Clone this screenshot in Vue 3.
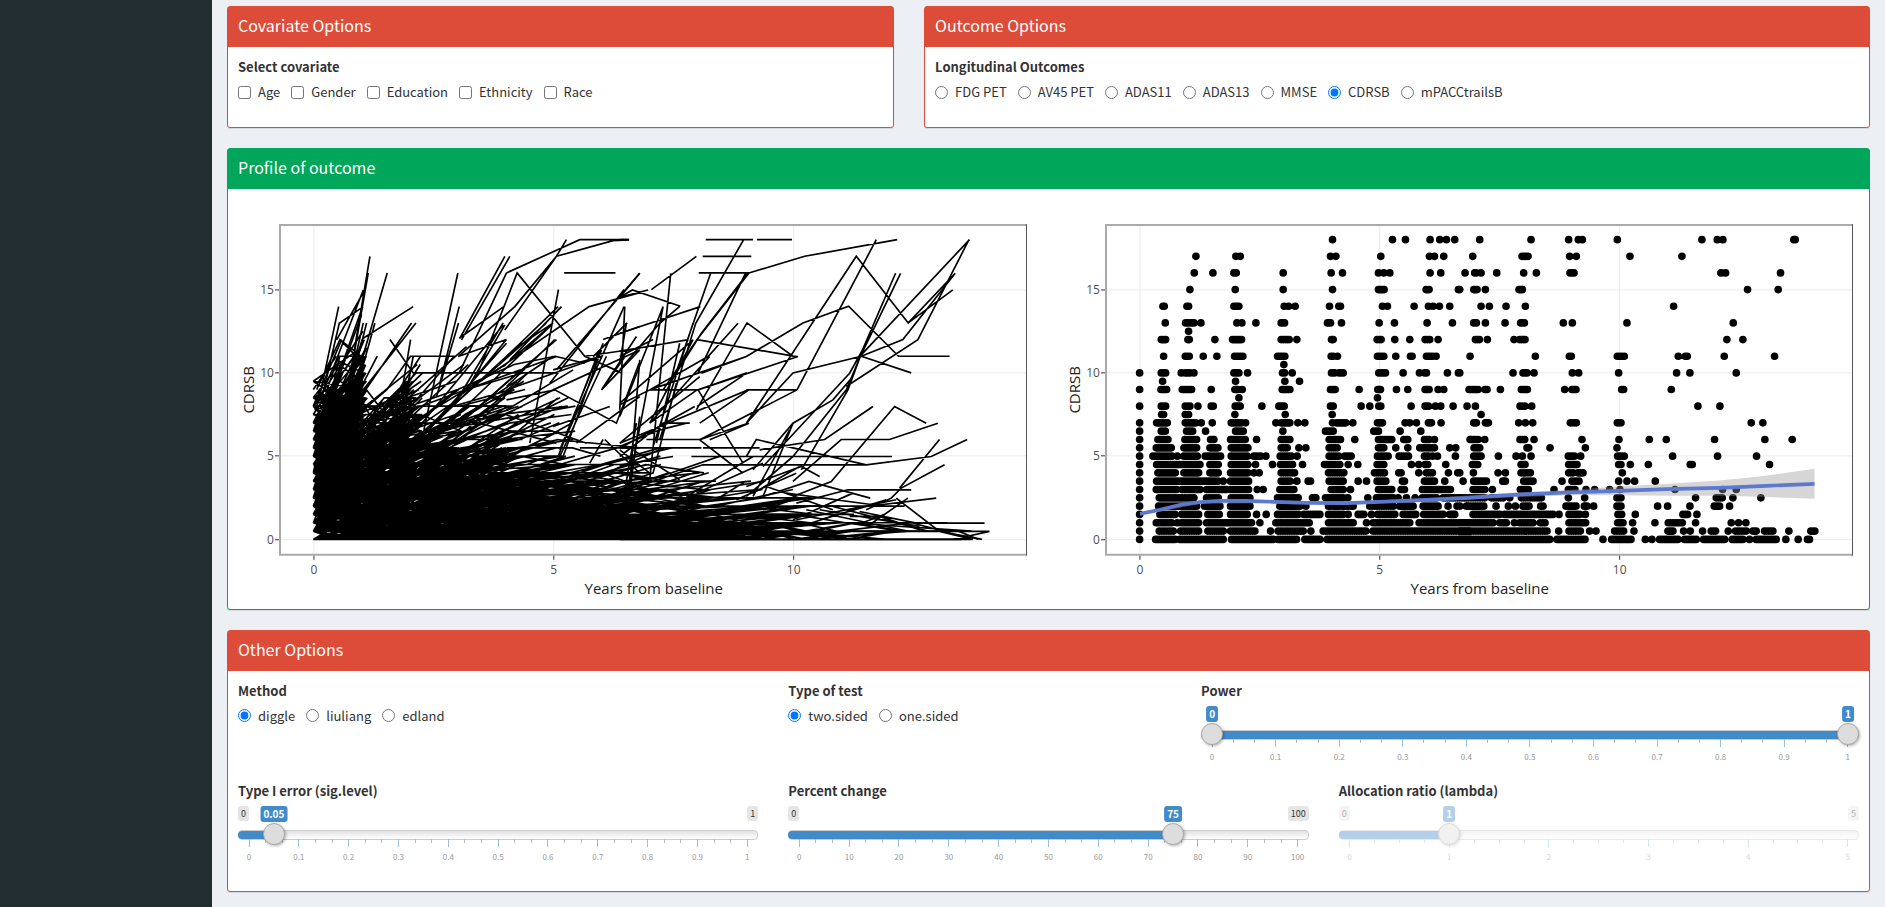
<script setup>
import { reactive } from 'vue'

const covariates = ['Age', 'Gender', 'Education', 'Ethnicity', 'Race']
const outcomes = ['FDG PET', 'AV45 PET', 'ADAS11', 'ADAS13', 'MMSE', 'CDRSB', 'mPACCtrailsB']
const methods = ['diggle', 'liuliang', 'edland']
const tests = ['two.sided', 'one.sided']

const form = reactive({
  covariates: [],
  outcome: 'CDRSB',
  method: 'diggle',
  test: 'two.sided',
})

const tenths = ['0', '0.1', '0.2', '0.3', '0.4', '0.5', '0.6', '0.7', '0.8', '0.9', '1']
const tens = ['0', '10', '20', '30', '40', '50', '60', '70', '80', '90', '100']

const sliders = reactive([
  { id: 'power', label: 'Power', min: 0, max: 1, step: 0.01, values: [0, 1], labels: tenths, parts: 3 },
  { id: 'alpha', label: 'Type I error (sig.level)', min: 0, max: 1, step: 0.01, values: [0.05], labels: tenths, parts: 3 },
  { id: 'change', label: 'Percent change', min: 0, max: 100, step: 1, values: [75], labels: tens, parts: 3 },
  { id: 'lambda', label: 'Allocation ratio (lambda)', min: 0, max: 5, step: 1, values: [1], labels: ['0', '1', '2', '3', '4', '5'], parts: 4, disabled: true },
])

function ticks(s) {
  const out = []
  s.labels.forEach((text, i) => {
    out.push({ text })
    if (i < s.labels.length - 1) for (let k = 1; k < s.parts; k++) out.push({ text: '' })
  })
  return out
}

// The handle is 22px wide, so its centre travels between 11px and 100% - 11px.
function place(s, v) {
  const p = (v - s.min) / (s.max - s.min)
  return `calc(11px + (100% - 22px) * ${p})`
}

function fill(s) {
  if (s.values.length === 2) return { '--from': place(s, s.values[0]), '--to': place(s, s.values[1]) }
  return { '--from': '0px', '--to': place(s, s.values[0]) }
}

// Drawing units of both panels: 144 per year, 50 per CDRSB point, zero at y = 989.
const yOf = (v) => 989 - 50 * v

// Scatter rows: [score, first six and a half years, later years]; "a-b" is a run of dots.
const rows = [
  [18, '818 998 1037 1111 1140 1160 1185', '60 214 327 356 368 473 727 773 790 1003 1007'],
  [17, '408 528 541 812 828 963 1109 1124 1152', '39 187-205 330 350 511 667'],
  [16, '403 459 522 529 670 814 848 956 972 990 1111 1143 1216', '16 45 49 64 111 192 230 331-343 784 798 963'],
  [15, '390 526 670 818 956-973 1099 1108 1196', '0 42-52 77 178-188 864 956'],
  [14, '309 313 381 386 522-537 673 686 706 809 837 842 968 983 1063 1106 1120 1139 1170', '64 89 139 197 642'],
  [13, '316 377-402 423 531 546 588 664-674 803-812 845 958 1004 1102 1178', '42-50 77 136 183-194 311 338 502 821'],
  [12.5, '386', ''],
  [12, '304-317 384 388 465 518-545 664-688 711 815-820 952-964 1005 1050 1096-1110 1135', '47-59 83 163 180-196 802 850'],
  [11, '311 376-388 430 471 524-549 653-675 814-820 833 953-972 1008 1052 1057 1100-1118 1129', '31 227 329-335 473-494 656 677-683 794 945'],
  [10.5, '672', ''],
  [10, '239 304-317 364 376-390 402 522-537 563 668-674 697 815-824 838-850 957-977 1030 1079 1095 1100 1163 1196', '0 160 190-202 223 338 357 477 651 691 830'],
  [9.5, '308 527 675 719', ''],
  [9, '239 303-320 367-395 454 525-533 547 667-690 812-826 898 954-962 1010 1044 1096-1108 1135 1152 1228', '28-55 76-82 122 185-203 315 337-349 486-492 635'],
  [8.5, '537 953', ''],
  [8, '239 304-317 376-390 414 454-460 526-541 606 657-673 812-820 904 930 957-963 1054 1096-1106 1127 1143 1180 1222', '22 47 181-195 216 715 781'],
  [7.5, '305 311 376 386 525 676 817', '64'],
  [7, '239 290-322 376-408 424 457 514-545 557 648 664-690 714 735 818 830-858 879 953-968 1036 1050 1070 1106-1115 1144', '42-50 77-86 177 197 219 332-350 473-484 875 910'],
  [6.5, '239 304-316 380-398 437 527-550 669 797-820 942-956 1021 1083', ''],
  [6, '239 294-324 375-410 452-462 512-556 590 664-690 808-842 885 956-996 1032-1044 1094-1108 1124 1231', '35-55 75 181-195 223 367 478 569 620 765 916 998'],
  [5.5, '239 289-334 372-410 450-474 514-564 664-682 717 738 808-832 956-972 1008 1044 1080-1124 1170 1188', '43-60 202-207 271 377 472'],
  [5, '239 279-336 352 372-412 436-482 514-562 582-602 618 661-694 712 808-836 855-874 953-985 1018-1046 1094-1106 1118 1133 1187', '42-64 116 169 188 214 326-344 363 474-494 639 774 891'],
  [4.5, '239 290-420 450-475 514-564 587 638 662-698 728 794-840 865 894 952-972 1055 1077 1096-1104 1158', '38-54 184-196 327-352 477-484 512 566 692-698 930'],
  [4, '239 294-346 372-416 450-475 512-564 582 598 664-704 806-852 944-974 1017-1024 1077 1100-1118 1166 1194', '0 41 115 137 184-212 327-340 355-370 488'],
  [3.5, '239 290-474 490 512-566 664-690 711 745-752 808-850 895 920 952-978 1028-1034 1094-1124 1155 1210', '10 42-80 129-137 192-220 307 337-358 477 502 525 587'],
  [3, '239 289-350 366-420 440-500 512-566 592 610 660-702 814-850 872 956-996 1024-1034 1088-1172', '40-75 98 182-206 283 326-346 379 405 450 481 646 789 830'],
  [2.5, '239 298-402 440-475 514-570 653-715 758-768 797-850 864 924 950-1000 1015 1040 1066 1088-1130 1150-1200', '0-75 95-130 150 185-245 326 375 472-484 708 770-788 820 904'],
  [2, '239 296-410 434-480 512-570 660-720 738 806-880 930-1000 1020-1060 1090-1135 1165 1192 1222', '0 20-72 109 146 167 190-208 243-250 319-349 374-382 402 472-484 594 624 691 764-780 810'],
  [1.5, '239 300-345 366-416 444-478 512-562 590 619 653-715 732-780 806-850 865 895-912 935 954-1005 1030-1068 1092-1150 1170-1185', '40-120 135-280 298 328-360 377 475-486 527 670-684 712'],
  [1, '239 289-335 352 364-416 440-575 600 648-748 806-880 920 940-1050 1078-1230', '0-100 120-140 164 180-220 242-256 328-378 474-490 519 586 626-668 708 815 837 859'],
  [0.5, '239 298-340 362-416 444-490 512-585 632 655-730 753 790-918 940-1230', '0-262 297 328-362 390 409 465-492 523 625-640 672 692 729 755-768 806 828-860 880-890 915-940 988 1054-1066'],
  [0, '239 287-345 360-490 515-640 655-710 735-780 802-1232', '0-270 292-376 430 456-514 557 577 600-655 675-710 732-795 818-850 870 890-950 979 1016 1044-1050'],
]

function expand(list, shift) {
  return list.split(' ').filter(Boolean).flatMap((t) => {
    const [a, b] = t.split('-').map(Number)
    if (b === undefined) return [a + shift]
    const n = Math.max(1, Math.ceil((b - a) / 7))
    return Array.from({ length: n + 1 }, (_, i) => a + shift + ((b - a) * i) / n)
  })
}

const dots = rows
  .flatMap(([v, early, late]) => [...expand(early, 0), ...expand(late, 1200)].map((x) => `M${x.toFixed(1)},${yOf(v)}h0`))
  .join('')

const fitLine =
  'M240,912L300,900L365,884L420,877L480,873L560,873L640,876L740,879L860,880L960,876L1100,870L1230,864L1300,859L1400,853L1530,848L1678,843L1820,838L1980,834L2120,828L2265,822'
const ribbon =
  'M240,908L420,872L640,872L860,876L1100,865L1300,852L1530,840L1678,830L1840,821L1980,812L2100,800L2265,777V867L2100,861L1980,858L1840,858L1678,856L1530,856L1300,865L1100,874L860,884L640,880L420,882L240,918Z'

// Individual trajectories that stand clear of the dense mass.
const early =
  'M860,189L1080,89H1228M1010,139L1180,92L1228,90M1033,189H1187M380,560L450,139M370,620L445,189M420,470L502,189' +
  'M612,660L714,189M720,385L855,139M725,390L870,139M350,390L435,239M295,580L356,290M300,590L358,340L430,290M430,385L580,290' +
  'M430,540L588,339M430,550L575,339M510,389L580,489H1010M570,439H705M660,520L718,290M650,560L716,339M718,385L852,290' +
  'M715,440L885,290L1010,139L1040,89M770,500L892,189L1095,439L1206,489M718,489L860,189M855,360L1010,139M930,700L1016,239' +
  'M715,560L1108,290L1260,248M870,450L1025,290M860,440L1015,290M880,420L1000,339M850,470L995,345M1010,480L1260,190M990,520L1213,239' +
  'M1030,700L1213,290M1150,389L1260,350M1120,440L1222,339M1005,439L1095,460M1095,439L1260,415M1145,540L1260,420M1000,480L1140,440' +
  'M860,570L1005,540L1190,640L1258,460M1020,740L1160,439M1030,740L1145,420M1015,740L1135,430M1020,720L1150,400M430,439L355,439M360,389L425,440' +
  'M430,590H495L440,690M430,580L490,690M715,440L860,389M570,560L740,410M700,590L850,339M740,540L855,345M720,560L860,389M860,530L1005,389' +
  'M430,600L500,540L572,439M520,700L572,389M530,700L580,439M540,700L572,480M420,500L465,339M430,520L472,439M380,560L430,339M390,540L440,339' +
  'M330,500L430,240M340,540L428,290M290,539L360,389L410,440M285,600L350,450L430,489M600,590L1010,440M570,640H740M700,589L870,540M720,589H860' +
  'M860,540L1145,440M860,600L1060,480M1000,540L1260,420M1145,540L1216,440M1070,700L1260,560M1000,650L1170,590M1080,714H1260M1010,689L1260,714' +
  'M860,615L1100,700M740,630L1010,700M1150,689L1110,760M1155,689L1260,790M1200,765H1260M1215,960L1260,620M1205,900L1250,640M1230,820L1260,450' +
  'M1145,540L1250,380M570,700L980,339M580,740L990,350M720,640L1010,389M700,640L1000,439M590,660L850,345M600,690L860,400'
const late =
  'M0,89H28M258,89H400M412,89H517M249,139H395M237,189H388L555,139L833,89M95,239L230,139M0,262L60,190M0,262L38,240L182,289M0,262L85,240' +
  'M20,860L130,290M90,810L153,190M165,500L273,189M120,690L228,340L372,89M150,520L245,370L385,189M235,490L378,189M130,540L232,389L388,189' +
  'M0,370L242,290M0,424L207,389M232,389L535,441M0,440L100,389M90,540L265,440L355,340M230,600L382,339L520,439M245,490L380,440L550,339L687,289L837,439H990' +
  'M380,640L710,139L866,339L1007,190M532,540L770,89M90,540H235L535,440M90,540L382,439M235,540L382,489M380,540H532M380,640L520,489L725,439L850,389L1007,190' +
  'M725,439L875,489M866,339L1000,240M680,530L895,389L1048,90M720,440L1050,89M720,440L828,190M722,440L843,190M520,740L680,540L722,440' +
  'M430,770L690,490L740,400M545,780L685,540L722,440M400,780L520,640L640,570L700,500M235,540L370,760M232,590L382,489M240,690L532,540M0,700L385,540L440,540' +
  'M240,640L388,540M240,690L385,640M270,690L388,640M90,640L232,540M90,640L270,440M80,689H240M0,714H245M250,714H420M215,740H817M250,765H740' +
  'M420,720L615,689L760,590M380,740L410,689L520,714L740,765L935,740L1043,689M520,815L665,689H810L955,640M520,860L635,815L825,590L920,640' +
  'M430,860L568,815L752,865M530,880L685,840H875M840,835L960,689M740,900L815,865L845,835L975,765M520,889H855M750,945L865,865M830,865L960,965L1088,989' +
  'M600,930L740,890L950,865M890,940H1095M720,905L890,940M700,965H1110M0,989H1060M1000,989L1110,965M960,965L1060,989M430,860L520,640M400,860L510,660' +
  'M0,600L15,290M0,480L120,340L180,289M0,460L20,340M0,580L220,390M0,585L90,540M0,620L130,290M100,710L220,340M90,640L220,389M110,700L180,400M100,790L170,520' +
  'M0,700L240,500M10,710L225,590M0,740L130,640H210M0,710L120,660L200,640M240,690L330,760M240,690L370,790M0,720L90,790M40,720L180,810M0,765L160,740' +
  'M380,830L545,770L600,800M200,860L400,740M230,850L430,760M380,860L520,740M350,870L530,790M400,850L540,770M430,900L520,870M440,830L640,900M500,850L760,885' +
  'M520,930L700,850M540,950L800,870M530,930L830,870M560,900L870,965M640,890L930,965M600,900L900,950M690,920H780L900,960M380,914H540M700,940L840,965'

// Deterministic noise source, so that the dense area is the same on each load.
let seed = 20240
function rnd() {
  seed = (seed * 1664525 + 1013904223) % 4294967296
  return seed / 4294967296
}

const ceiling = [[0, 9], [0.45, 12], [1, 14], [1.3, 9], [1.7, 8], [2, 11], [3, 11], [4, 12], [5, 11.5], [6, 8], [7, 6], [8, 5.5], [9, 4.5], [10, 3.2], [11, 2], [12, 1.6], [13.3, 1], [14, 0.5]]
function limit(t) {
  const i = ceiling.findIndex(([x]) => x >= t)
  if (i <= 0) return i === 0 ? 9 : 0
  const [x0, y0] = ceiling[i - 1]
  const [x1, y1] = ceiling[i]
  return y0 + ((y1 - y0) * (t - x0)) / (x1 - x0)
}

const visits = [0, 0.5, 1, 1.5, 2, 3, 4, 5, 6, 7, 8, 9, 10, 11, 12, 13, 13.6]
function subject(v0, rate, last, noise) {
  let d = ''
  let v = v0
  let prev = 0
  for (const visit of visits) {
    if (visit > last) break
    if (visit && rnd() < (visit > 2 ? 0.35 : 0.15)) continue
    const spread = visit < 2 ? 0.16 : visit < 4 ? 0.35 : 0.6
    const t = visit ? visit + (rnd() - 0.2) * spread : 0
    v = Math.max(0, v + rate * (t - prev) * (0.5 + rnd()) + (rnd() - 0.5) * noise * (1 + v * 0.25))
    const score = Math.round(v * 2) / 2
    if (visit && score > limit(t)) break
    d += `${d ? 'L' : 'M'}${(280 + 144 * t).toFixed(0)},${yOf(score)}`
    prev = t
  }
  return d
}

const expo = (mean) => -Math.log(1 - rnd()) * mean
let mass = ''
for (let i = 0; i < 420; i++) mass += subject(2 + rnd() * 4.5, 0.4 + expo(1.6), rnd() < 0.35 ? 1 : 2, 0.9)
for (let i = 0; i < 90; i++) mass += subject(4 + rnd() * 5, expo(2), 1, 1)
for (let i = 0; i < 420; i++) mass += subject(0.5 + rnd() * 3.5, expo(0.45), 2 + rnd() * 3.6, 0.8)
for (let i = 0; i < 150; i++) mass += subject(0.5 + rnd() * 2, 0.3 + expo(0.8), 3 + rnd() * 3, 0.6)
for (let i = 0; i < 800; i++) mass += subject(rnd() * 2.2, expo(0.07), 3 + rnd() * 5.5, 0.9)
for (let i = 0; i < 330; i++) mass += subject(rnd() * 0.8, expo(0.05), 6 + rnd() * 6, 0.6)
for (let i = 0; i < 240; i++) mass += subject(rnd() * 0.3, expo(0.02), 5 + rnd() * 9, 0.5)

const gridX = [{ x: 76, t: '0' }, { x: 316, t: '5' }, { x: 556, t: '10' }]
const gridY = [{ y: 341, t: '0' }, { y: 257, t: '5' }, { y: 174, t: '10' }, { y: 91, t: '15' }]
const panels = ['lines', 'points']
</script>

<template>
  <div class="page">
    <aside class="sidebar"></aside>
    <main class="content">
      <div class="row">
        <div class="col c5">
          <section class="box danger">
            <header><h3>Covariate Options</h3></header>
            <div class="body">
              <fieldset>
                <legend>Select covariate</legend>
                <div class="options">
                  <label v-for="c in covariates" :key="c"><input v-model="form.covariates" type="checkbox" :value="c" />{{ c }}</label>
                </div>
              </fieldset>
            </div>
          </section>
        </div>
        <div class="col c7">
          <section class="box danger">
            <header><h3>Outcome Options</h3></header>
            <div class="body">
              <fieldset>
                <legend>Longitudinal Outcomes</legend>
                <div class="options">
                  <label v-for="o in outcomes" :key="o"><input v-model="form.outcome" type="radio" name="outcome" :value="o" />{{ o }}</label>
                </div>
              </fieldset>
            </div>
          </section>
        </div>
      </div>

      <div class="row">
        <div class="col c12">
          <section class="box success">
            <header><h3>Profile of outcome</h3></header>
            <div class="body plots">
              <svg v-for="kind in panels" :key="kind" class="plot" viewBox="0 0 796 400">
                <g class="grid">
                  <line v-for="g in gridX" :key="g.t" :x1="g.x" :x2="g.x" y1="26" y2="356" />
                  <line v-for="g in gridY" :key="g.t" x1="42" x2="789" :y1="g.y" :y2="g.y" />
                </g>
                <g v-if="kind === 'lines'" class="traces">
                  <g transform="translate(-18 11) scale(0.33333)">
                    <path :d="mass" />
                    <path :d="early" />
                  </g>
                  <g transform="translate(382 11) scale(0.33333)"><path :d="late" /></g>
                </g>
                <g v-else transform="translate(-4 11) scale(0.33333)">
                  <path class="dots" :d="dots" />
                  <path class="ribbon" :d="ribbon" />
                  <path class="fit" :d="fitLine" />
                </g>
                <path class="frame" d="M789,26H42V356H789" />
                <path class="frame-end" d="M789,25V357" />
                <g class="marks">
                  <line v-for="g in gridX" :key="g.t" :x1="g.x" :x2="g.x" y1="357" y2="361" />
                  <line v-for="g in gridY" :key="g.t" x1="37" x2="41" :y1="g.y" :y2="g.y" />
                </g>
                <g class="scale">
                  <text v-for="g in gridX" :key="g.t" :x="g.x" y="375" text-anchor="middle">{{ g.t }}</text>
                  <text v-for="g in gridY" :key="g.t" x="36" :y="g.y + 4" text-anchor="end">{{ g.t }}</text>
                </g>
                <g class="axis">
                  <text x="416" y="395" text-anchor="middle">Years from baseline</text>
                  <text transform="translate(16 191) rotate(-90)" text-anchor="middle">CDRSB</text>
                </g>
              </svg>
            </div>
          </section>
        </div>
      </div>

      <div class="row">
        <div class="col c12">
          <section class="box danger">
            <header><h3>Other Options</h3></header>
            <div class="body settings">
              <fieldset class="s4">
                <legend>Method</legend>
                <div class="options">
                  <label v-for="m in methods" :key="m"><input v-model="form.method" type="radio" name="method" :value="m" />{{ m }}</label>
                </div>
              </fieldset>
              <fieldset class="s3">
                <legend>Type of test</legend>
                <div class="options">
                  <label v-for="t in tests" :key="t"><input v-model="form.test" type="radio" name="test" :value="t" />{{ t }}</label>
                </div>
              </fieldset>
              <div v-for="s in sliders" :key="s.id" class="group" :class="s.values.length === 2 ? 's5' : 's4'">
                <label class="title" :for="s.id">{{ s.label }}</label>
                <div class="slider" :class="{ off: s.disabled }" :style="fill(s)">
                  <div class="badges">
                    <template v-if="s.values.length === 1">
                      <span class="bound">{{ s.min }}</span>
                      <span class="bound">{{ s.max }}</span>
                    </template>
                    <output v-for="(v, i) in s.values" :key="i" class="value" :style="{ left: place(s, v) }">{{ v }}</output>
                  </div>
                  <div class="rail">
                    <input
                      v-for="(v, i) in s.values"
                      :id="i ? s.id + '-to' : s.id"
                      :key="i"
                      v-model.number="s.values[i]"
                      type="range"
                      :aria-label="i ? s.label + ' upper' : s.label"
                      :min="s.min"
                      :max="s.max"
                      :step="s.step"
                      :disabled="s.disabled"
                    />
                  </div>
                  <div class="ticks">
                    <span v-for="(t, i) in ticks(s)" :key="i" class="tick" :class="{ major: t.text }">{{ t.text }}</span>
                  </div>
                </div>
              </div>
            </div>
          </section>
        </div>
      </div>
    </main>
  </div>
</template>

<style>
body {
  margin: 0;
  background: #ecf0f5;
}
</style>

<style scoped>
* {
  box-sizing: border-box;
}
.page {
  display: flex;
  min-height: 100vh;
  background: #ecf0f5;
  color: #333;
  font-family: "Noto Sans CJK SC", "Open Sans", sans-serif;
  font-size: 13px;
  line-height: 20px;
}
.sidebar {
  flex: none;
  width: 212px;
  background: #222d32;
}
.content {
  flex: 1;
  min-width: 0;
  padding-top: 6px;
}
.row {
  display: grid;
  grid-template-columns: repeat(12, minmax(0, 1fr));
}
.col {
  padding: 0 15px;
}
.c5 {
  grid-column: span 5;
}
.c7 {
  grid-column: span 7;
}
.c12 {
  grid-column: span 12;
}
.box {
  margin-bottom: 20px;
  border: 1px solid var(--tone);
  border-radius: 3px;
  background: #fff;
  box-shadow: 0 1px 1px rgba(0, 0, 0, 0.1);
}
.danger {
  --tone: #dd4b39;
}
.success {
  --tone: #00a65a;
}
header {
  padding: 8px 10px 12px;
  background: var(--tone);
  color: #fff;
}
h3 {
  margin: 0;
  font-size: 16px;
  font-weight: 400;
  line-height: 20px;
}
.body {
  padding: 10px;
}
fieldset {
  min-width: 0;
  margin: 0;
  padding: 0 0 15px;
  border: 0;
}
legend,
.title {
  display: block;
  margin-bottom: 5px;
  padding: 0;
  font-weight: 700;
}
.options {
  display: flex;
  flex-wrap: wrap;
  gap: 11px;
}
.options label {
  display: flex;
  align-items: center;
  gap: 7px;
}
.options input {
  width: 13px;
  height: 13px;
  margin: 0;
}
.plots {
  display: grid;
  grid-template-columns: 1fr 1fr;
  gap: 30px;
}
.plot {
  display: block;
  width: 100%;
  height: auto;
  font-family: "Open Sans", sans-serif;
}
.grid line {
  stroke: #ebebeb;
}
.traces path {
  fill: none;
  stroke: #000;
  stroke-width: 5;
}
.dots {
  fill: none;
  stroke: #000;
  stroke-width: 23;
  stroke-linecap: round;
}
.ribbon {
  fill: #999;
  fill-opacity: 0.4;
}
.fit {
  fill: none;
  stroke: #5c78d0;
  stroke-width: 11;
}
.frame {
  fill: none;
  stroke: #aaa;
  stroke-width: 2;
}
.frame-end {
  stroke: #555;
}
.marks line {
  stroke: #333;
}
.scale {
  fill: #4d4d4d;
  font-size: 12px;
}
.axis {
  fill: #222;
  font-size: 15px;
}
.settings {
  display: grid;
  grid-template-columns: repeat(12, minmax(0, 1fr));
  margin: 0 -15px;
  padding: 10px;
}
.settings > * {
  padding-right: 15px;
  padding-left: 15px;
}
.s3 {
  grid-column: span 3;
}
.s4 {
  grid-column: span 4;
}
.s5 {
  grid-column: span 5;
}
.group {
  padding-bottom: 15px;
}
.slider {
  height: 60px;
}
.off {
  opacity: 0.4;
}
.badges {
  position: relative;
  display: flex;
  justify-content: space-between;
  align-items: flex-start;
  height: 17px;
}
.bound {
  padding: 0 3px;
  border-radius: 3px;
  background: #e5e5e5;
  font-size: 9px;
  line-height: 15px;
}
.value {
  position: absolute;
  top: 0;
  padding: 0 3px;
  border-radius: 3px;
  background: #428bca;
  color: #fff;
  font-size: 10px;
  font-weight: 700;
  line-height: 16px;
  transform: translateX(-50%);
}
.rail {
  display: grid;
  height: 22px;
}
.rail::before,
.rail::after {
  grid-area: 1 / 1;
  align-self: center;
  height: 8px;
  margin-top: 2px;
  border-radius: 4px;
  content: "";
}
.rail::before {
  border: 1px solid #ccc;
  background: linear-gradient(#e2e2e2, #fff);
}
.rail::after {
  background: linear-gradient(to right, transparent var(--from), #428bca var(--from), #428bca var(--to), transparent var(--to));
}
.rail input {
  z-index: 1;
  grid-area: 1 / 1;
  width: 100%;
  height: 22px;
  margin: 0;
  appearance: none;
  background: none;
  pointer-events: none;
}
.rail input::-webkit-slider-thumb {
  width: 22px;
  height: 22px;
  appearance: none;
  border: 1px solid #aaa;
  border-radius: 50%;
  background: #ddd;
  box-shadow: 1px 1px 3px rgba(0, 0, 0, 0.3);
  pointer-events: auto;
}
.ticks {
  display: flex;
  justify-content: space-between;
  margin-top: -6px;
  padding: 0 11px;
  color: #999;
  font-size: 8px;
  line-height: 12px;
}
.tick {
  display: flex;
  flex-direction: column;
  align-items: center;
  width: 0;
}
.tick::before {
  flex: none;
  width: 1px;
  height: 4px;
  background: #bbb;
  content: "";
}
.major::before {
  height: 8px;
  margin-bottom: 4px;
  background: #9dbdd9;
}
</style>
